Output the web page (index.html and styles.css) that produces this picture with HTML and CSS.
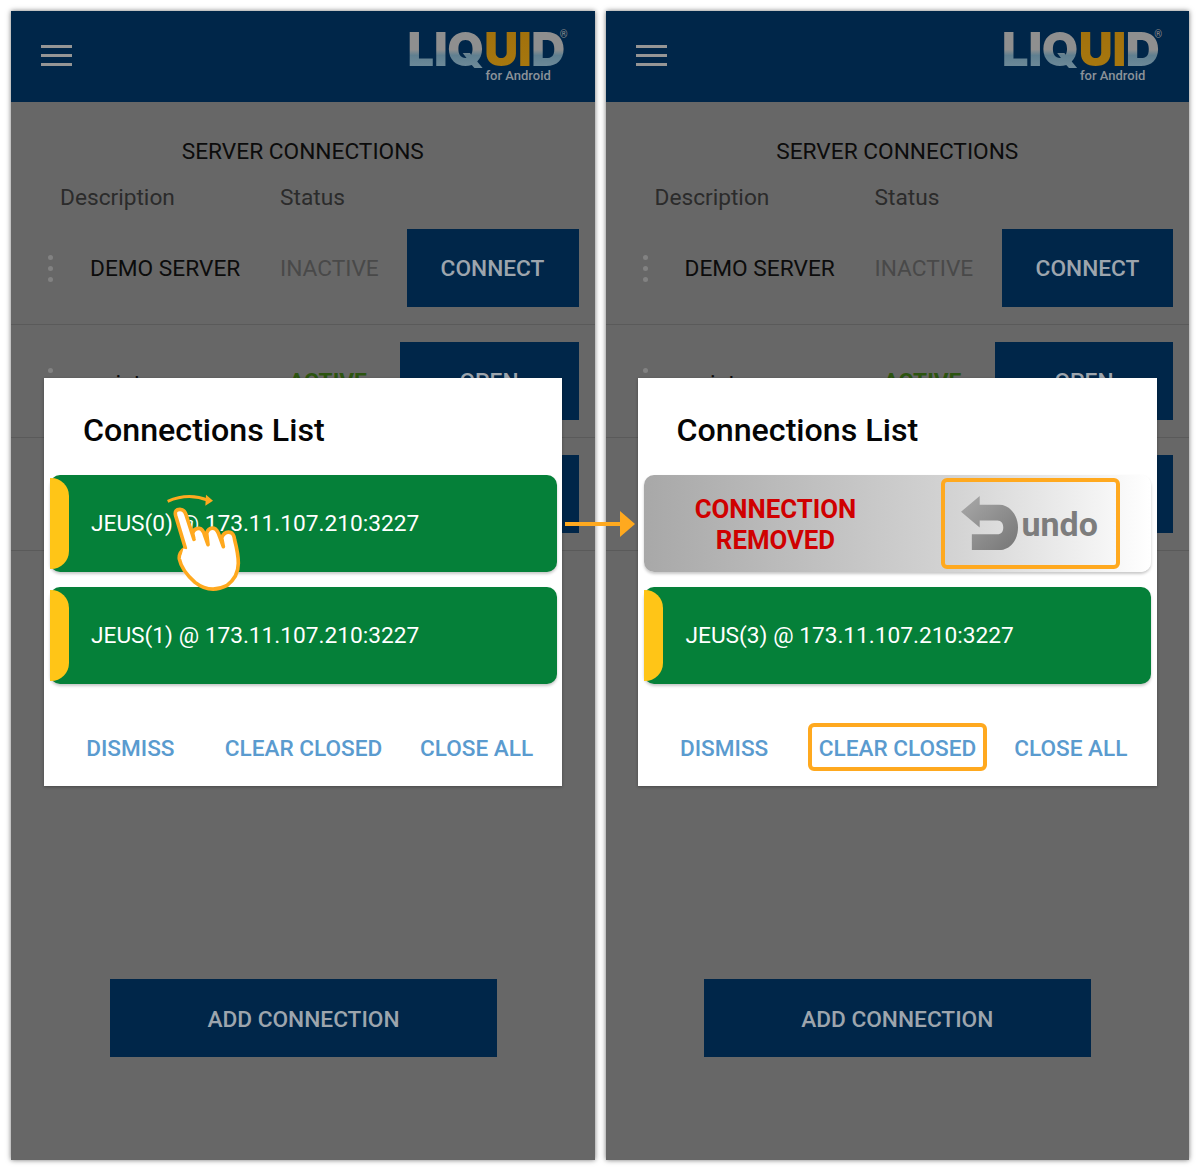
FILE: index.html
```html
<!DOCTYPE html>
<html lang="en">
<head>
  <meta charset="UTF-8">
  <title>Connections List</title>
  <link rel="stylesheet" href="styles.css">
</head>
<body>
  <div class="wrap">
    <div class="phone phone-left">
      <div class="topbar">
        <div class="burger"><span></span><span></span><span></span></div>
        <div class="logo">
          <div class="logo-word"><span class="lq">LIQ</span><span class="ui">UI</span><span class="lq">D</span></div>
          <div class="logo-reg">®</div>
          <div class="logo-sub">for Android</div>
        </div>
      </div>
      <div class="main">
        <div class="heading">SERVER CONNECTIONS</div>
        <div class="cols"><span class="col-desc">Description</span><span>Status</span></div>
        <div class="row">
          <div class="dots"><i></i><i></i><i></i></div>
          <div class="name">DEMO SERVER</div>
          <div class="state">INACTIVE</div>
          <div class="btn">CONNECT</div>
        </div>
        <div class="row">
          <div class="dots"><i></i><i></i><i></i></div>
          <div class="name low">quint</div>
          <div class="state active">ACTIVE</div>
          <div class="btn wide">OPEN</div>
        </div>
        <!-- third row is covered by the dialog except for the button's edge -->
        <div class="row">
          <div class="dots"></div>
          <div class="name"></div>
          <div class="state"></div>
          <div class="btn wide"></div>
        </div>
      </div>
      <div class="btn add">ADD CONNECTION</div>

      <div class="modal">
        <div class="modal-title">Connections List</div>
        <div class="conn"><span class="tab"></span>JEUS(0) @ 173.11.107.210:3227</div>
        <div class="conn"><span class="tab"></span>JEUS(1) @ 173.11.107.210:3227</div>
        <div class="actions">
          <div class="action"><span>DISMISS</span></div>
          <div class="action"><span>CLEAR CLOSED</span></div>
          <div class="action"><span>CLOSE ALL</span></div>
        </div>
      </div>

      <svg class="hand" viewBox="400 460 250 300">
        <path class="hand-line" d="M413 482 Q475 455 535 479"/>
        <path class="hand-head" d="M528 462 L549 480 L526 495 Z"/>
        <path class="hand-body" d="M466 622 L437 525 Q432 506 450 506 Q463 506 468 522 L492 596 L488 578 Q492 562 508 563 Q519 565 524 584 L534 612 L530 578 Q535 560 552 563 Q562 566 569 588 L580 618 L575 592 Q582 572 600 575 Q612 578 614 598 Q625 640 625 668 Q625 710 590 735 Q540 760 495 725 Q455 690 448 655 Q446 635 466 622 Z"/>
        <path class="hand-cut" d="M466 625 L458 655"/>
      </svg>
    </div>

    <div class="phone phone-right">
      <div class="topbar">
        <div class="burger"><span></span><span></span><span></span></div>
        <div class="logo">
          <div class="logo-word"><span class="lq">LIQ</span><span class="ui">UI</span><span class="lq">D</span></div>
          <div class="logo-reg">®</div>
          <div class="logo-sub">for Android</div>
        </div>
      </div>
      <div class="main">
        <div class="heading">SERVER CONNECTIONS</div>
        <div class="cols"><span class="col-desc">Description</span><span>Status</span></div>
        <div class="row">
          <div class="dots"><i></i><i></i><i></i></div>
          <div class="name">DEMO SERVER</div>
          <div class="state">INACTIVE</div>
          <div class="btn">CONNECT</div>
        </div>
        <div class="row">
          <div class="dots"><i></i><i></i><i></i></div>
          <div class="name low">quint</div>
          <div class="state active">ACTIVE</div>
          <div class="btn wide">OPEN</div>
        </div>
        <div class="row">
          <div class="dots"></div>
          <div class="name"></div>
          <div class="state"></div>
          <div class="btn wide"></div>
        </div>
      </div>
      <div class="btn add">ADD CONNECTION</div>

      <div class="modal">
        <div class="modal-title">Connections List</div>
        <div class="conn removed">
          <div class="removed-text">CONNECTION<br>REMOVED</div>
          <div class="undo">
            <svg class="undo-icon" viewBox="0 0 60 56">
              <defs>
                <linearGradient id="undoFill" x1="0" y1="0" x2="1" y2="1">
                  <stop offset="0" stop-color="#a9a9a9"/>
                  <stop offset="1" stop-color="#767676"/>
                </linearGradient>
              </defs>
              <path fill="url(#undoFill)" d="M0 16 L19 0 V9 H39 C50 9 58 20 58 32 C58 45 50 55 39 55 H11 V39 H37 C41 39 43 36 43 32 C43 28 41 25 37 25 H19 V32 Z"/>
            </svg>
            <span>undo</span>
          </div>
        </div>
        <div class="conn"><span class="tab"></span>JEUS(3) @ 173.11.107.210:3227</div>
        <div class="actions">
          <div class="action"><span>DISMISS</span></div>
          <div class="action"><span class="marked">CLEAR CLOSED</span></div>
          <div class="action"><span>CLOSE ALL</span></div>
        </div>
      </div>
    </div>

    <svg class="arrow" viewBox="0 0 70 26">
      <path d="M0 13 H56" />
      <polygon points="55,0 70,13 55,26"/>
    </svg>
  </div>
</body>
</html>
```

FILE: styles.css
```css
html, body { margin: 0; background: #fff; }
body { font-family: Roboto, "Liberation Sans", sans-serif; }
.wrap { position: relative; display: flex; gap: 11px; padding: 11px; height: 1149px; overflow: hidden; }

.phone { position: relative; display: flex; flex-direction: column; width: 584px; background: #676767; box-shadow: 0 0 5px rgba(0,0,0,.55); overflow: hidden; }

.topbar { display: flex; align-items: center; justify-content: space-between; height: 91px; flex: none; background: #002649; padding: 0 29px 0 30px; box-sizing: border-box; }
.burger { display: flex; flex-direction: column; gap: 6px; margin-top: -2px; }
.burger span { display: block; width: 31px; height: 3px; background: #959595; }
.logo { position: relative; width: 158px; height: 60px; }
.logo-word { font-family: Inter, "Liberation Sans", sans-serif; font-weight: 900; font-size: 47px; line-height: 44px; letter-spacing: -.2px; white-space: nowrap; }
.logo-word span { background-clip: text; -webkit-background-clip: text; color: transparent; }
.logo-word .lq { background-image: linear-gradient(#8f8f8f 52%, #5f7f90 62%, #7b939f 100%); }
.logo-word .ui { background-image: linear-gradient(#a06f0c, #a8790f); }
.logo-reg { position: absolute; top: 3px; right: -2px; font-size: 10px; line-height: 10px; color: #8a8a8a; }
.logo-sub { position: absolute; top: 41px; left: 78px; font-size: 13px; line-height: 16px; font-weight: 500; color: #8b9299; white-space: nowrap; }

.main { flex: 1; }
.heading { margin-top: 37px; text-align: center; font-size: 22.7px; line-height: 26px; color: #0c0c0c; }
.cols { display: flex; margin-top: 20px; padding-left: 49px; font-size: 22.7px; line-height: 26px; color: #2b2b2b; }
.col-desc { width: 220px; }

.row { display: flex; align-items: center; height: 78px; padding: 17px 16px 17px 0; border-bottom: 1px solid #5a5a5a; }
.cols + .row { padding-top: 18px; }
.dots { display: flex; flex-direction: column; gap: 6px; width: 79px; padding-left: 37px; box-sizing: border-box; }
.dots i { display: block; width: 5px; height: 5px; border-radius: 50%; background: #828282; }
.name { width: 190px; font-size: 22.7px; color: #0c0c0c; }
.name.low { padding-top: 4px; }
.state { flex: 1; font-size: 22.7px; color: #494949; white-space: nowrap; }
.state.active { padding-left: 9px; color: #2c5410; font-weight: 700; }

.btn { display: flex; align-items: center; justify-content: center; width: 172px; height: 78px; background: #002649; color: #9da5ad; font-size: 22.7px; font-weight: 500; flex: none; }
.btn.wide { width: 179px; }
.btn.add { width: 387px; margin: 0 auto 103px; padding-top: 2px; box-sizing: border-box; }
.phone-left .btn.add { margin-left: 99px; }
.phone-right .row .btn { width: 171px; }
.phone-right .row .btn.wide { width: 178px; }

.modal { position: absolute; left: 33px; top: 367px; width: 519px; height: 408px; background: #fff; box-shadow: 0 1px 3px rgba(0,0,0,.3); }
.phone-left .modal { width: 518px; }
.phone-left .conn { margin-right: 5px; }
.phone-right .modal { left: 32px; }
.phone-right .conn { padding-left: 42px; }
.modal-title { padding: 32px 0 0 39px; font-size: 32.2px; line-height: 40px; font-weight: 500; color: #050505; height: 65px; }
.conn { position: relative; display: flex; align-items: center; height: 97px; margin: 0 6px 15px 6px; padding-left: 41px; background: #058039; border-radius: 10px; box-shadow: 0 2px 3px rgba(0,0,0,.22); color: #fff; font-size: 22.7px; }
.tab { position: absolute; left: 0; top: 3px; bottom: 3px; width: 19px; background: #ffc517; border-radius: 0 18px 18px 0; }

.phone-right .removed { padding-left: 0; background: linear-gradient(90deg, #a8a8a8, #d4d4d4 62%, #ffffff); }
.removed-text { width: 264px; padding-top: 2px; text-align: center; color: #d00000; font-size: 25.8px; line-height: 31px; font-weight: 700; }
.undo { display: flex; align-items: center; gap: 2px; width: 179px; height: 91px; margin-left: 33px; padding-left: 16px; box-sizing: border-box; border: 4px solid #ffa91f; border-radius: 6px; }
.undo-icon { width: 59px; height: 55px; flex: none; }
.undo span { font-size: 34px; font-weight: 700; color: #7d7d7d; }

.actions { display: grid; grid-template-columns: repeat(3, 1fr); margin-top: 39px; padding: 0 2px 0 3px; }
.action { display: flex; justify-content: center; font-size: 22.6px; font-weight: 500; color: #5a9bcf; white-space: nowrap; }
.action span { display: block; padding: 3px 7px 0; line-height: 37px; border: 4px solid transparent; border-radius: 6px; }
.action .marked { border-color: #ffa91f; }

.hand { position: absolute; left: 152px; top: 483px; width: 84px; height: 100px; }
.hand-line { fill: none; stroke: #ffa91f; stroke-width: 9; }
.hand-head { fill: #ffa91f; }
.hand-body { fill: #fff; stroke: #ffa91f; stroke-width: 11; stroke-linejoin: round; }
.hand-cut { stroke: #fff; stroke-width: 12; }

.arrow { position: absolute; left: 565px; top: 511px; width: 70px; height: 26px; }
.arrow path { fill: none; stroke: #ffa91f; stroke-width: 4; }
.arrow polygon { fill: #ffa91f; }
```
